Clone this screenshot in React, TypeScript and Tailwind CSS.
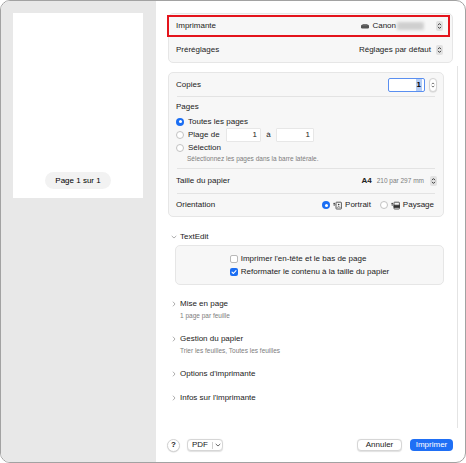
import React from 'react';

// macOS-style print dialog (French), scaled down

function Stepper() {
    return (
        <span className="flex h-[10px] w-[7px] items-center justify-center rounded-[2px] bg-[#e2e2e2]">
            <svg viewBox="0 0 7 10" className="h-[10px] w-[7px]" fill="none" stroke="#2a2a2a" strokeWidth="0.9" strokeLinecap="round" strokeLinejoin="round">
                <path d="M2.2 3.9 3.5 2.6 4.8 3.9M2.2 6.1 3.5 7.4 4.8 6.1" />
            </svg>
        </span>
    );
}

function RoundStepper() {
    return (
        <span className="flex h-[14px] w-[8px] items-center justify-center rounded-full border border-[#d4d4d4] bg-white shadow-[0_0.5px_1px_rgba(0,0,0,0.15)]">
            <svg viewBox="0 0 8 14" className="h-[14px] w-[8px]" fill="none" stroke="#333" strokeWidth="0.9" strokeLinecap="round" strokeLinejoin="round">
                <path d="M2.6 5.6 4 4.2 5.4 5.6M2.6 8.4 4 9.8 5.4 8.4" />
            </svg>
        </span>
    );
}

function Radio({ on }: { on?: boolean }) {
    return on ? (
        <span className="flex h-[8px] w-[8px] shrink-0 items-center justify-center rounded-full bg-[#1b6ef3]">
            <span className="h-[3px] w-[3px] rounded-full bg-white" />
        </span>
    ) : (
        <span className="block h-[8px] w-[8px] shrink-0 rounded-full border border-[#c2c2c2] bg-white" />
    );
}

function Check({ on }: { on?: boolean }) {
    return on ? (
        <span className="flex h-[8px] w-[8px] shrink-0 items-center justify-center rounded-[2px] bg-[#1b6ef3]">
            <svg viewBox="0 0 8 8" className="h-[8px] w-[8px]" fill="none" stroke="white" strokeWidth="1.1" strokeLinecap="round" strokeLinejoin="round">
                <path d="M2 4.1 3.4 5.5 6 2.6" />
            </svg>
        </span>
    ) : (
        <span className="block h-[8px] w-[8px] shrink-0 rounded-[2px] border border-[#b9b9b9] bg-white" />
    );
}

function ChevronRight() {
    return (
        <svg viewBox="0 0 4 6" className="h-[6px] w-[4px]" fill="none" stroke="#9a9a9a" strokeWidth="0.8" strokeLinecap="round" strokeLinejoin="round">
            <path d="M1.2 1 3 3 1.2 5" />
        </svg>
    );
}

function ChevronDown() {
    return (
        <svg viewBox="0 0 6 4" className="h-[4px] w-[6px]" fill="none" stroke="#9a9a9a" strokeWidth="0.8" strokeLinecap="round" strokeLinejoin="round">
            <path d="M1 1.2 3 3 5 1.2" />
        </svg>
    );
}

function OrientIcon({ landscape }: { landscape?: boolean }) {
    return (
        <svg viewBox="0 0 9 9" className="block h-[9px] w-[9px]" fill="none" stroke="#333" strokeWidth="0.8">
            <path d="M1.2 4.5V2.2M0.4 3 1.2 2.2 2 3" strokeLinecap="round" strokeLinejoin="round" />
            <rect x="3" y="1.2" width="5.4" height="6.8" rx="0.6" />
            {landscape ? (
                <path d="M3 4.2h5.4v2.2H3z" fill="#333" />
            ) : (
                <>
                    <circle cx="5.7" cy="3.6" r="0.8" fill="#333" stroke="none" />
                    <path d="M4.2 6.6c0.4-1.1 2.6-1.1 3 0" />
                </>
            )}
        </svg>
    );
}

function Divider() {
    return <div className="mx-[8px] h-px bg-[#e3e3e3]" />;
}

function Section({ title, sub, className }: { title: string; sub?: string; className?: string }) {
    return (
        <div className={className}>
            <div className="flex h-[14px] items-center">
                <span className="flex w-[12px] justify-center">
                    <ChevronRight />
                </span>
                <span>{title}</span>
            </div>
            {sub && <div className="ml-[12px] flex h-[10px] items-center text-[6.5px] text-[#7d7d7d]">{sub}</div>}
        </div>
    );
}

export default function App() {
    return (
        <div className="h-[463px] w-[466px] overflow-hidden bg-white font-['Liberation_Sans',Arial,sans-serif] text-[8px] text-[#222]">
            <div className="flex h-full w-full overflow-hidden rounded-[10px] border border-[#a2a2a2]">
                {/* preview sidebar */}
                <div className="w-[155px] shrink-0 bg-[#e8e8e8] pl-[12px] pt-[12px]">
                    <div className="flex h-[185px] w-[130px] flex-col items-center justify-end bg-white pb-[9px]">
                        <div className="flex h-[17px] w-[66px] items-center justify-center rounded-full bg-[#f2f2f2] text-black">
                            Page 1 sur 1
                        </div>
                    </div>
                </div>

                {/* settings pane */}
                <div className="flex min-w-0 flex-1 flex-col">
                    <div className="relative mx-[12px] mt-[12px] h-[50px] rounded-[5px] border border-[#e6e6e6] bg-[#f7f7f7]">
                        <div className="flex h-[24px] items-center pl-[7px] pr-[9px]">
                            <span>Imprimante</span>
                            <span className="ml-auto flex items-center">
                                <svg viewBox="0 0 8 5" className="mr-[3px] h-[5px] w-[8px]">
                                    <rect x="0" y="0.8" width="8" height="3.6" rx="1.2" fill="#555" />
                                    <rect x="1.5" y="0" width="5" height="1.4" rx="0.4" fill="#777" />
                                </svg>
                                <span>Canon</span>
                                <span className="ml-[1px] h-[8px] w-[27px] rounded-[2px] bg-[#cfcfcf] blur-[1.5px]" />
                                <span className="ml-[12px]">
                                    <Stepper />
                                </span>
                            </span>
                        </div>
                        <div className="flex h-[24px] items-center pl-[7px] pr-[9px]">
                            <span>Préréglages</span>
                            <span className="ml-auto flex items-center gap-[5px]">
                                <span>Réglages par défaut</span>
                                <Stepper />
                            </span>
                        </div>
                        <div className="absolute left-[-2px] top-[1px] h-[22px] w-[283px] border-2 border-[#e4141c]" />
                    </div>

                    <div className="mt-[3px] flex h-[362px]">
                        <div className="min-w-0 flex-1 pl-[12px] pr-[13px] pt-[6px]">
                            <div className="rounded-[5px] border border-[#e6e6e6] bg-[#f7f7f7]">
                                <div className="flex h-[23px] items-center pl-[7px] pr-[6px]">
                                    <span>Copies</span>
                                    <span className="ml-auto flex items-center gap-[4px]">
                                        <span className="flex h-[14px] w-[37px] items-center justify-end rounded-[2px] border-[1.5px] border-[#5a8ff0] bg-white pr-[2px]">
                                            <span className="bg-[#b5cdf5] px-[1px] font-bold text-black">1</span>
                                        </span>
                                        <RoundStepper />
                                    </span>
                                </div>
                                <Divider />
                                <div className="h-[71px] pl-[7px] pt-[4px]">
                                    <div className="flex h-[12px] items-center">Pages</div>
                                    <div className="mt-[2px] flex h-[13px] items-center gap-[4px]">
                                        <Radio on />
                                        <span>Toutes les pages</span>
                                    </div>
                                    <div className="flex h-[13px] items-center">
                                        <Radio />
                                        <span className="ml-[4px] w-[39px]">Plage de</span>
                                        <span className="flex h-[12px] w-[33px] items-center justify-end bg-white pr-[3px] shadow-[0_0_0_0.5px_#d8d8d8]">1</span>
                                        <span className="w-[17px] text-center">à</span>
                                        <span className="flex h-[12px] w-[36px] items-center justify-end bg-white pr-[3px] shadow-[0_0_0_0.5px_#d8d8d8]">1</span>
                                    </div>
                                    <div className="flex h-[13px] items-center gap-[4px]">
                                        <Radio />
                                        <span>Sélection</span>
                                    </div>
                                    <div className="flex h-[10px] items-center pl-[11px] text-[6.5px] text-[#7d7d7d]">
                                        Sélectionnez les pages dans la barre latérale.
                                    </div>
                                </div>
                                <Divider />
                                <div className="flex h-[24px] items-center pl-[7px] pr-[6px]">
                                    <span>Taille du papier</span>
                                    <span className="ml-auto flex items-center">
                                        <span className="font-semibold">A4</span>
                                        <span className="ml-[5px] text-[6.5px] text-[#7d7d7d]">210 par 297 mm</span>
                                        <span className="ml-[6px]">
                                            <Stepper />
                                        </span>
                                    </span>
                                </div>
                                <Divider />
                                <div className="flex h-[22px] items-center pl-[7px] pr-[9px]">
                                    <span>Orientation</span>
                                    <span className="ml-auto flex items-center">
                                        <Radio on />
                                        <span className="ml-[3px]">
                                            <OrientIcon />
                                        </span>
                                        <span className="ml-[3px]">Portrait</span>
                                        <span className="ml-[9px]">
                                            <Radio />
                                        </span>
                                        <span className="ml-[3px]">
                                            <OrientIcon landscape />
                                        </span>
                                        <span className="ml-[3px]">Paysage</span>
                                    </span>
                                </div>
                            </div>

                            <div className="mt-[12px] flex h-[16px] items-center">
                                <span className="flex w-[12px] justify-center">
                                    <ChevronDown />
                                </span>
                                <span>TextEdit</span>
                            </div>
                            <div className="ml-[7px] flex justify-center rounded-[5px] border border-[#e6e6e6] bg-[#f7f7f7] py-[6px]">
                                <div>
                                    <div className="flex h-[13px] items-center gap-[3px]">
                                        <Check />
                                        <span>Imprimer l'en-tête et le bas de page</span>
                                    </div>
                                    <div className="flex h-[13px] items-center gap-[3px]">
                                        <Check on />
                                        <span>Reformater le contenu à la taille du papier</span>
                                    </div>
                                </div>
                            </div>

                            <Section className="mt-[12px]" title="Mise en page" sub="1 page par feuille" />
                            <Section className="mt-[11px]" title="Gestion du papier" sub="Trier les feuilles, Toutes les feuilles" />
                            <Section className="mt-[11px]" title="Options d'imprimante" />
                            <Section className="mt-[10px]" title="Infos sur l'imprimante" />
                        </div>
                        <div className="w-[8px] shrink-0 border-l border-[#e4e4e4]" />
                    </div>

                    <div className="flex flex-1 items-center pl-[11px] pr-[12px]">
                        <span className="flex h-[13px] w-[13px] items-center justify-center rounded-full border border-[#d2d2d2] bg-white font-bold shadow-[0_0.5px_1px_rgba(0,0,0,0.15)]">
                            ?
                        </span>
                        <span className="ml-[7px] flex h-[12px] w-[36px] items-center rounded-[4px] border border-[#d6d6d6] bg-white shadow-[0_0.5px_1px_rgba(0,0,0,0.12)]">
                            <span className="flex-1 text-center">PDF</span>
                            <span className="h-[7px] w-px bg-[#cfcfcf]" />
                            <span className="flex w-[9px] justify-center">
                                <svg viewBox="0 0 6 4" className="h-[4px] w-[6px]" fill="none" stroke="#444" strokeWidth="0.8" strokeLinecap="round" strokeLinejoin="round">
                                    <path d="M1 1.2 3 3 5 1.2" />
                                </svg>
                            </span>
                        </span>
                        <span className="ml-auto flex h-[12px] w-[45px] items-center justify-center rounded-[4px] border border-[#d6d6d6] bg-white shadow-[0_0.5px_1px_rgba(0,0,0,0.12)]">
                            Annuler
                        </span>
                        <span className="ml-[8px] flex h-[12px] w-[43px] items-center justify-center rounded-[4px] bg-[#1f6ff5] text-white">
                            Imprimer
                        </span>
                    </div>
                </div>
            </div>
        </div>
    );
}
